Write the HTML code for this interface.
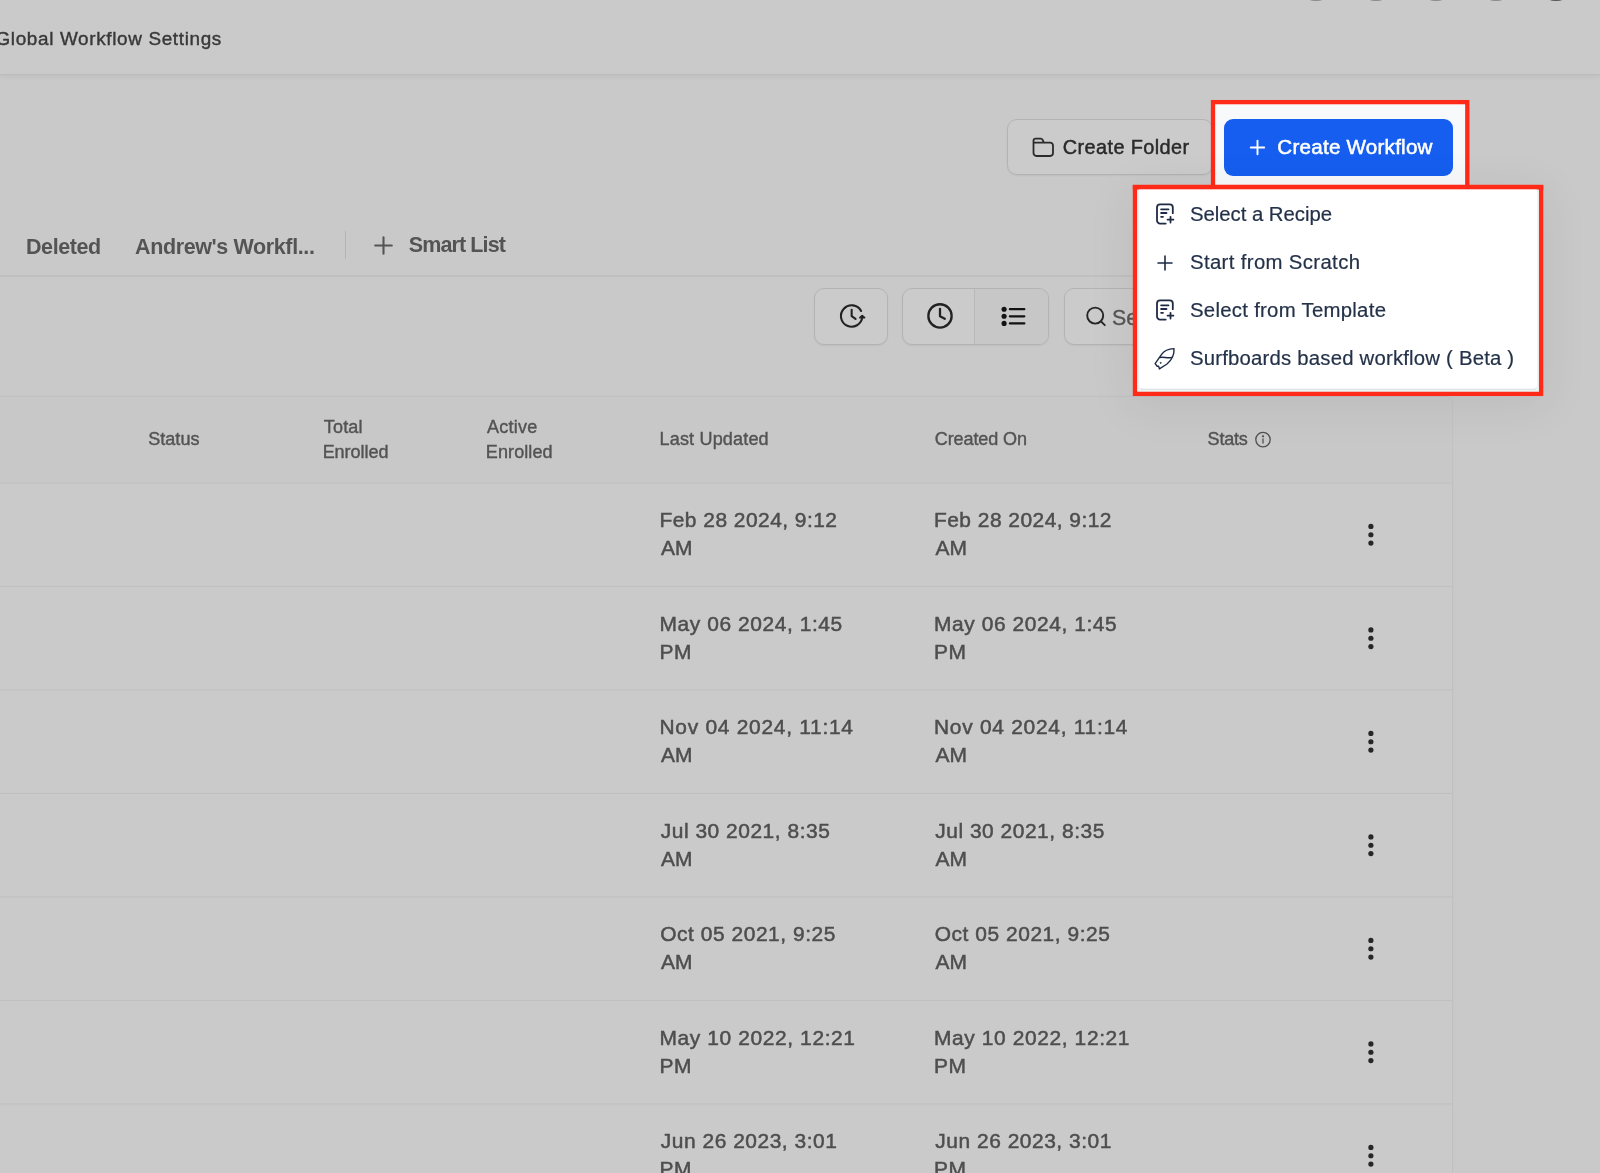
<!DOCTYPE html>
<html lang="en">
<head>
<meta charset="utf-8">
<title>Workflows</title>
<style>
*{box-sizing:border-box;margin:0;padding:0}
html,body{width:1600px;height:1173px;overflow:hidden}
body{background:#c9c9c9;font-family:"Liberation Sans",sans-serif;position:relative;color:#4f4f4f}
#root{position:absolute;left:0;top:0;width:1600px;height:1173px;will-change:transform}
.abs{position:absolute}
.t{position:absolute;white-space:nowrap;line-height:1}
/* header */
#hdr{left:0;top:0;width:1600px;height:73.5px;background:#cacaca;box-shadow:0 1px 0 #bdbdbd,0 2px 5px rgba(0,0,0,.07)}
#hdr .title{left:-4.5px;top:29.5px;font-size:18.9px;letter-spacing:.656px;color:#383838;-webkit-text-stroke:.4px #383838}
.av{position:absolute;top:-39px;width:40px;height:40px;border-radius:50%;background:#8a8a8a}
/* buttons */
.btn{position:absolute;border:1px solid #b3b3b3;background:#cbcbcb;border-radius:10px;box-shadow:0 1px 2px rgba(0,0,0,.06)}
/* tabs */
.tab{font-weight:700;color:#545454;font-size:21.5px}
/* table */
.th{font-size:18.05px;color:#535353;-webkit-text-stroke:.4px #535353}
.td{font-size:20.93px;color:#4e4e4e;-webkit-text-stroke:.5px #4e4e4e}
/* highlight boxes */
#box2{left:1134px;top:186px;width:408px;height:209px;box-shadow:0 8px 44px 6px rgba(0,0,0,.06)}
.mi{font-size:20.35px;color:#243249;-webkit-text-stroke:.2px #243249}
#cw{left:1224px;top:119px;width:229px;height:57px;border-radius:9px;background:#155eef}
</style>
</head>
<body>
<div id="root">
<div id="hdr" class="abs">
  <span class="t title">Global Workflow Settings</span>
  <i class="av" style="left:1296px"></i><i class="av" style="left:1356px"></i><i class="av" style="left:1416px"></i><i class="av" style="left:1476px"></i><i class="av" style="left:1536px;background:#555"></i>
</div>

<!-- Create Folder -->
<div class="btn" style="left:1006.5px;top:119px;width:206px;height:56px"></div>
<svg class="abs" style="left:1030px;top:135px" width="26" height="24" viewBox="0 0 26 24" fill="none" stroke="#2b2b2b" stroke-width="1.8" stroke-linecap="round" stroke-linejoin="round"><path d="M3.5 7.6V5.6a2 2 0 0 1 2-2h5.2a2 2 0 0 1 1.8 1.1l1.4 2.9M3.5 7.6h16.6a2.9 2.9 0 0 1 2.9 2.9v7.6a2.9 2.9 0 0 1-2.9 2.9H6.4a2.9 2.9 0 0 1-2.9-2.9z"/></svg>
<span class="t" id="cf" style="left:1062.75px;top:138.3px;font-size:19.9px;letter-spacing:.4px;color:#2a2a2a;-webkit-text-stroke:.45px #2a2a2a">Create Folder</span>

<!-- tabs -->
<span class="t tab" id="tb1" style="left:26px;top:236.5px;letter-spacing:-.408px">Deleted</span>
<span class="t tab" id="tb2" style="left:135px;top:236.5px;letter-spacing:-.376px">Andrew's Workfl...</span>
<div class="abs" style="left:344.6px;top:230.5px;width:1.2px;height:28px;background:#b3b3b3"></div>
<svg class="abs" style="left:372.1px;top:233.8px" width="23" height="23" viewBox="0 0 23 23" stroke="#555" stroke-width="2.1" stroke-linecap="round"><path d="M11.5 3.2v16.6M3.2 11.5h16.6"/></svg>
<span class="t tab" id="tb3" style="left:408.75px;top:234.8px;letter-spacing:-.883px">Smart List</span>
<div class="abs" style="left:0;top:275px;width:1452px;height:1.5px;background:#c0c0c0"></div>

<!-- toolbar -->
<div class="btn" style="left:814px;top:288px;width:74px;height:56.5px;border-radius:10px"></div>
<div class="btn" style="left:902px;top:288px;width:147px;height:56.5px;border-radius:10px;overflow:hidden"><div class="abs" style="left:71px;top:0;width:1px;height:56px;background:#b9b9b9"></div><div class="abs" style="left:72px;top:0;width:75px;height:56px;background:#c7c7c7"></div></div>
<div class="btn" style="left:1064px;top:288px;width:388px;height:56.5px;border-radius:10px"></div>
<!-- clock refresh -->
<svg class="abs" style="left:836px;top:300px" width="32" height="32" viewBox="0 0 32 32" fill="none" stroke="#222" stroke-width="2.1" stroke-linecap="round" stroke-linejoin="round"><path d="M25.1 11A10.7 10.7 0 1 0 26.3 17"/><path d="M24 17.7L26.2 15.6L28.5 17.7Z" fill="#222" stroke-width="1.8"/><path d="M15.65 9.9v6.3l3.9 2.6"/></svg>
<!-- clock -->
<svg class="abs" style="left:923.7px;top:300px" width="32" height="32" viewBox="0 0 32 32" fill="none" stroke="#222" stroke-width="2.3" stroke-linecap="round" stroke-linejoin="round"><circle cx="16" cy="15.9" r="11.65"/><path d="M16 8.8v7.4l4.8 2.5"/></svg>
<!-- list -->
<svg class="abs" style="left:998px;top:300px" width="32" height="32" viewBox="0 0 32 32" fill="none" stroke="#131313" stroke-width="2.3" stroke-linecap="round"><path d="M11.9 9.2h14.4M11.9 16.3h14.4M11.9 23.4h14.4"/><g fill="#131313" stroke="none"><circle cx="6.1" cy="9.2" r="2.55"/><circle cx="6.1" cy="16.3" r="2.55"/><circle cx="6.1" cy="23.4" r="2.55"/></g></svg>
<!-- search -->
<svg class="abs" style="left:1082px;top:303px" width="28" height="28" viewBox="0 0 28 28" fill="none" stroke="#262626" stroke-width="1.9" stroke-linecap="round"><circle cx="13.2" cy="12.6" r="8"/><path d="M19.2 18.6l3.6 3.6"/></svg>
<span class="t" id="se" style="left:1112px;top:307.6px;font-size:21.3px;color:#555;-webkit-text-stroke:.3px #555">Search</span>

<!-- table -->
<svg class="abs" style="left:0;top:380px" width="1600" height="793" viewBox="0 380 1600 793"><rect x="-20" y="396.3" width="1472.7" height="900" rx="8" fill="#cacaca" stroke="#bfbfbf"/><path d="M0 396.8H1444.2a8 8 0 0 1 8 8V482.4H0Z" fill="#c8c8c8"/><rect x="0" y="482.4" width="1452.2" height="1" fill="#bfbfbf"/><rect x="0" y="585.9" width="1452.2" height="1" fill="#bfbfbf"/><rect x="0" y="689.4" width="1452.2" height="1" fill="#bfbfbf"/><rect x="0" y="792.9" width="1452.2" height="1" fill="#bfbfbf"/><rect x="0" y="896.4" width="1452.2" height="1" fill="#bfbfbf"/><rect x="0" y="999.9" width="1452.2" height="1" fill="#bfbfbf"/><rect x="0" y="1103.4" width="1452.2" height="1" fill="#bfbfbf"/></svg>

<span class="t th" style="left:148.15px;top:430.35px;letter-spacing:.05px">Status</span>
<span class="t th" style="left:323.65px;top:417.5px;letter-spacing:.225px">Total</span>
<span class="t th" style="left:322.65px;top:442.75px;letter-spacing:-.05px">Enrolled</span>
<span class="t th" style="left:487.1px;top:417.5px;letter-spacing:.22px">Active</span>
<span class="t th" style="left:485.85px;top:442.75px;letter-spacing:.086px">Enrolled</span>
<span class="t th" style="left:659.55px;top:430.35px;letter-spacing:.164px">Last Updated</span>
<span class="t th" style="left:934.75px;top:430.35px;letter-spacing:-.111px">Created On</span>
<span class="t th" style="left:1207.55px;top:430.35px;letter-spacing:-.188px">Stats</span>
<svg class="abs" style="left:1254px;top:431px" width="18" height="18" viewBox="0 0 18 18" fill="none" stroke="#505050" stroke-width="1.3" stroke-linecap="round"><circle cx="9" cy="8.6" r="7.2"/><path d="M9 8v4"/><circle cx="9" cy="5.3" r=".5" fill="#505050"/></svg>

<!-- rows -->
<span class="t td" style="left:659.50px;top:510.28px;letter-spacing:0.478px">Feb 28 2024, 9:12</span><span class="t td" style="left:661.00px;top:538.28px;letter-spacing:-0.05px">AM</span>
<span class="t td" style="left:934.00px;top:510.28px;letter-spacing:0.478px">Feb 28 2024, 9:12</span><span class="t td" style="left:935.50px;top:538.28px;letter-spacing:-0.05px">AM</span>
<span class="t td" style="left:659.50px;top:613.78px;letter-spacing:0.588px">May 06 2024, 1:45</span><span class="t td" style="left:659.50px;top:641.78px;letter-spacing:0.6px">PM</span>
<span class="t td" style="left:934.00px;top:613.78px;letter-spacing:0.588px">May 06 2024, 1:45</span><span class="t td" style="left:934.00px;top:641.78px;letter-spacing:0.6px">PM</span>
<span class="t td" style="left:659.50px;top:717.28px;letter-spacing:0.726px">Nov 04 2024, 11:14</span><span class="t td" style="left:661.00px;top:745.28px;letter-spacing:-0.05px">AM</span>
<span class="t td" style="left:934.00px;top:717.28px;letter-spacing:0.726px">Nov 04 2024, 11:14</span><span class="t td" style="left:935.50px;top:745.28px;letter-spacing:-0.05px">AM</span>
<span class="t td" style="left:660.75px;top:820.78px;letter-spacing:0.531px">Jul 30 2021, 8:35</span><span class="t td" style="left:661.00px;top:848.78px;letter-spacing:-0.05px">AM</span>
<span class="t td" style="left:935.25px;top:820.78px;letter-spacing:0.531px">Jul 30 2021, 8:35</span><span class="t td" style="left:935.50px;top:848.78px;letter-spacing:-0.05px">AM</span>
<span class="t td" style="left:660.25px;top:924.28px;letter-spacing:0.547px">Oct 05 2021, 9:25</span><span class="t td" style="left:661.00px;top:952.28px;letter-spacing:-0.05px">AM</span>
<span class="t td" style="left:934.75px;top:924.28px;letter-spacing:0.547px">Oct 05 2021, 9:25</span><span class="t td" style="left:935.50px;top:952.28px;letter-spacing:-0.05px">AM</span>
<span class="t td" style="left:659.50px;top:1027.78px;letter-spacing:0.618px">May 10 2022, 12:21</span><span class="t td" style="left:659.50px;top:1055.78px;letter-spacing:0.6px">PM</span>
<span class="t td" style="left:934.00px;top:1027.78px;letter-spacing:0.618px">May 10 2022, 12:21</span><span class="t td" style="left:934.00px;top:1055.78px;letter-spacing:0.6px">PM</span>
<span class="t td" style="left:660.75px;top:1131.28px;letter-spacing:0.541px">Jun 26 2023, 3:01</span><span class="t td" style="left:659.50px;top:1159.28px;letter-spacing:0.6px">PM</span>
<span class="t td" style="left:935.25px;top:1131.28px;letter-spacing:0.541px">Jun 26 2023, 3:01</span><span class="t td" style="left:934.00px;top:1159.28px;letter-spacing:0.6px">PM</span>

<svg class="abs" style="left:1360px;top:500px" width="24" height="673" viewBox="1360 500 24 673" fill="#262626"><circle cx="1370.9" cy="526.45" r="2.6"/><circle cx="1370.9" cy="534.75" r="2.6"/><circle cx="1370.9" cy="543.05" r="2.6"/><circle cx="1370.9" cy="629.95" r="2.6"/><circle cx="1370.9" cy="638.25" r="2.6"/><circle cx="1370.9" cy="646.55" r="2.6"/><circle cx="1370.9" cy="733.45" r="2.6"/><circle cx="1370.9" cy="741.75" r="2.6"/><circle cx="1370.9" cy="750.05" r="2.6"/><circle cx="1370.9" cy="836.95" r="2.6"/><circle cx="1370.9" cy="845.25" r="2.6"/><circle cx="1370.9" cy="853.55" r="2.6"/><circle cx="1370.9" cy="940.45" r="2.6"/><circle cx="1370.9" cy="948.75" r="2.6"/><circle cx="1370.9" cy="957.05" r="2.6"/><circle cx="1370.9" cy="1043.95" r="2.6"/><circle cx="1370.9" cy="1052.25" r="2.6"/><circle cx="1370.9" cy="1060.55" r="2.6"/><circle cx="1370.9" cy="1147.45" r="2.6"/><circle cx="1370.9" cy="1155.75" r="2.6"/><circle cx="1370.9" cy="1164.05" r="2.6"/></svg>

<!-- highlight 1 + Create Workflow -->
<svg class="abs" style="left:1100px;top:90px" width="500" height="320" viewBox="1100 90 500 320"><rect x="1213" y="102.13" width="254.3" height="85" fill="#f8f9fb" stroke="#ff2a17" stroke-width="4.3"/></svg>
<div id="cw" class="abs"></div>
<svg class="abs" style="left:1245.8px;top:136px" width="23" height="23" viewBox="0 0 23 23" stroke="#fff" stroke-width="1.9" stroke-linecap="round"><path d="M11.5 4.8v13.4M4.8 11.5h13.4"/></svg>
<span class="t" id="cwt" style="left:1277.35px;top:137.1px;font-size:20.6px;letter-spacing:.236px;color:#fff;-webkit-text-stroke:.55px #fff">Create Workflow</span>

<!-- highlight 2 + menu -->
<div id="box2" class="abs"></div>
<svg class="abs" style="left:1100px;top:90px" width="500" height="320" viewBox="1100 90 500 320"><rect x="1134.95" y="187" width="406.15" height="206.9" fill="#ecf3f4" stroke="#ff2a17" stroke-width="4.3"/><rect x="1132.8" y="184.9" width="410.5" height="4.6" fill="#ff2a17"/><path d="M1141 388.9H1535.5" stroke="#cfd3d6" stroke-width="1.1"/><path d="M1139.3 189.4H1537V384.8a4 4 0 0 1-4 4H1143.3a4 4 0 0 1-4-4Z" fill="#fff"/></svg>
<span class="t mi" id="m1" style="left:1190px;top:203.77px;letter-spacing:-.036px">Select a Recipe</span>
<span class="t mi" id="m2" style="left:1190px;top:251.77px;letter-spacing:.356px">Start from Scratch</span>
<span class="t mi" id="m3" style="left:1190px;top:299.77px;letter-spacing:.276px">Select from Template</span>
<span class="t mi" id="m4" style="left:1190px;top:347.77px;letter-spacing:.194px">Surfboards based workflow ( Beta )</span>

<!-- menu icons -->
<svg class="abs" style="left:1150px;top:198px" width="30" height="32" viewBox="0 0 30 32" fill="none" stroke="#1e2b45" stroke-width="1.8" stroke-linecap="round" stroke-linejoin="round"><path d="M22.8 15.2V9.4a3.1 3.1 0 0 0-3.1-3.1H10.1A3.1 3.1 0 0 0 7 9.4v13.1a3.1 3.1 0 0 0 3.1 3.1h5.6"/><path d="M11.1 11.3h7.4M11.1 15h5.4M11.1 18.8h1.9"/><path d="M20.5 18.8v5.8M17.6 21.7h5.8"/></svg>
<svg class="abs" style="left:1153px;top:250.5px" width="24" height="24" viewBox="0 0 24 24" fill="none" stroke="#1e2b45" stroke-width="1.6" stroke-linecap="round"><path d="M12 5v14M5 12h14"/></svg>
<svg class="abs" style="left:1150px;top:294px" width="30" height="32" viewBox="0 0 30 32" fill="none" stroke="#1e2b45" stroke-width="1.8" stroke-linecap="round" stroke-linejoin="round"><path d="M22.8 15.2V9.4a3.1 3.1 0 0 0-3.1-3.1H10.1A3.1 3.1 0 0 0 7 9.4v13.1a3.1 3.1 0 0 0 3.1 3.1h5.6"/><path d="M11.1 11.3h7.4M11.1 15h5.4M11.1 18.8h1.9"/><path d="M20.5 18.8v5.8M17.6 21.7h5.8"/></svg>
<svg class="abs" style="left:1150px;top:343px" width="30" height="32" viewBox="0 0 30 32" fill="none" stroke="#1e2b45" stroke-width="1.4" stroke-linecap="round" stroke-linejoin="round"><path d="M5.1 20.6L11.6 11.4C14 7.9 18.5 5.9 24 5.6C24.4 11 22.5 16.2 17 21L9.4 25.9L8.6 23.3L7.2 23.3Z"/><path d="M10 14.5C14 13.6 17.5 15.8 21.8 14.3"/><circle cx="10.5" cy="19.9" r=".45" fill="#1e2b45" stroke-width=".8"/></svg>
</div>
</body>
</html>
